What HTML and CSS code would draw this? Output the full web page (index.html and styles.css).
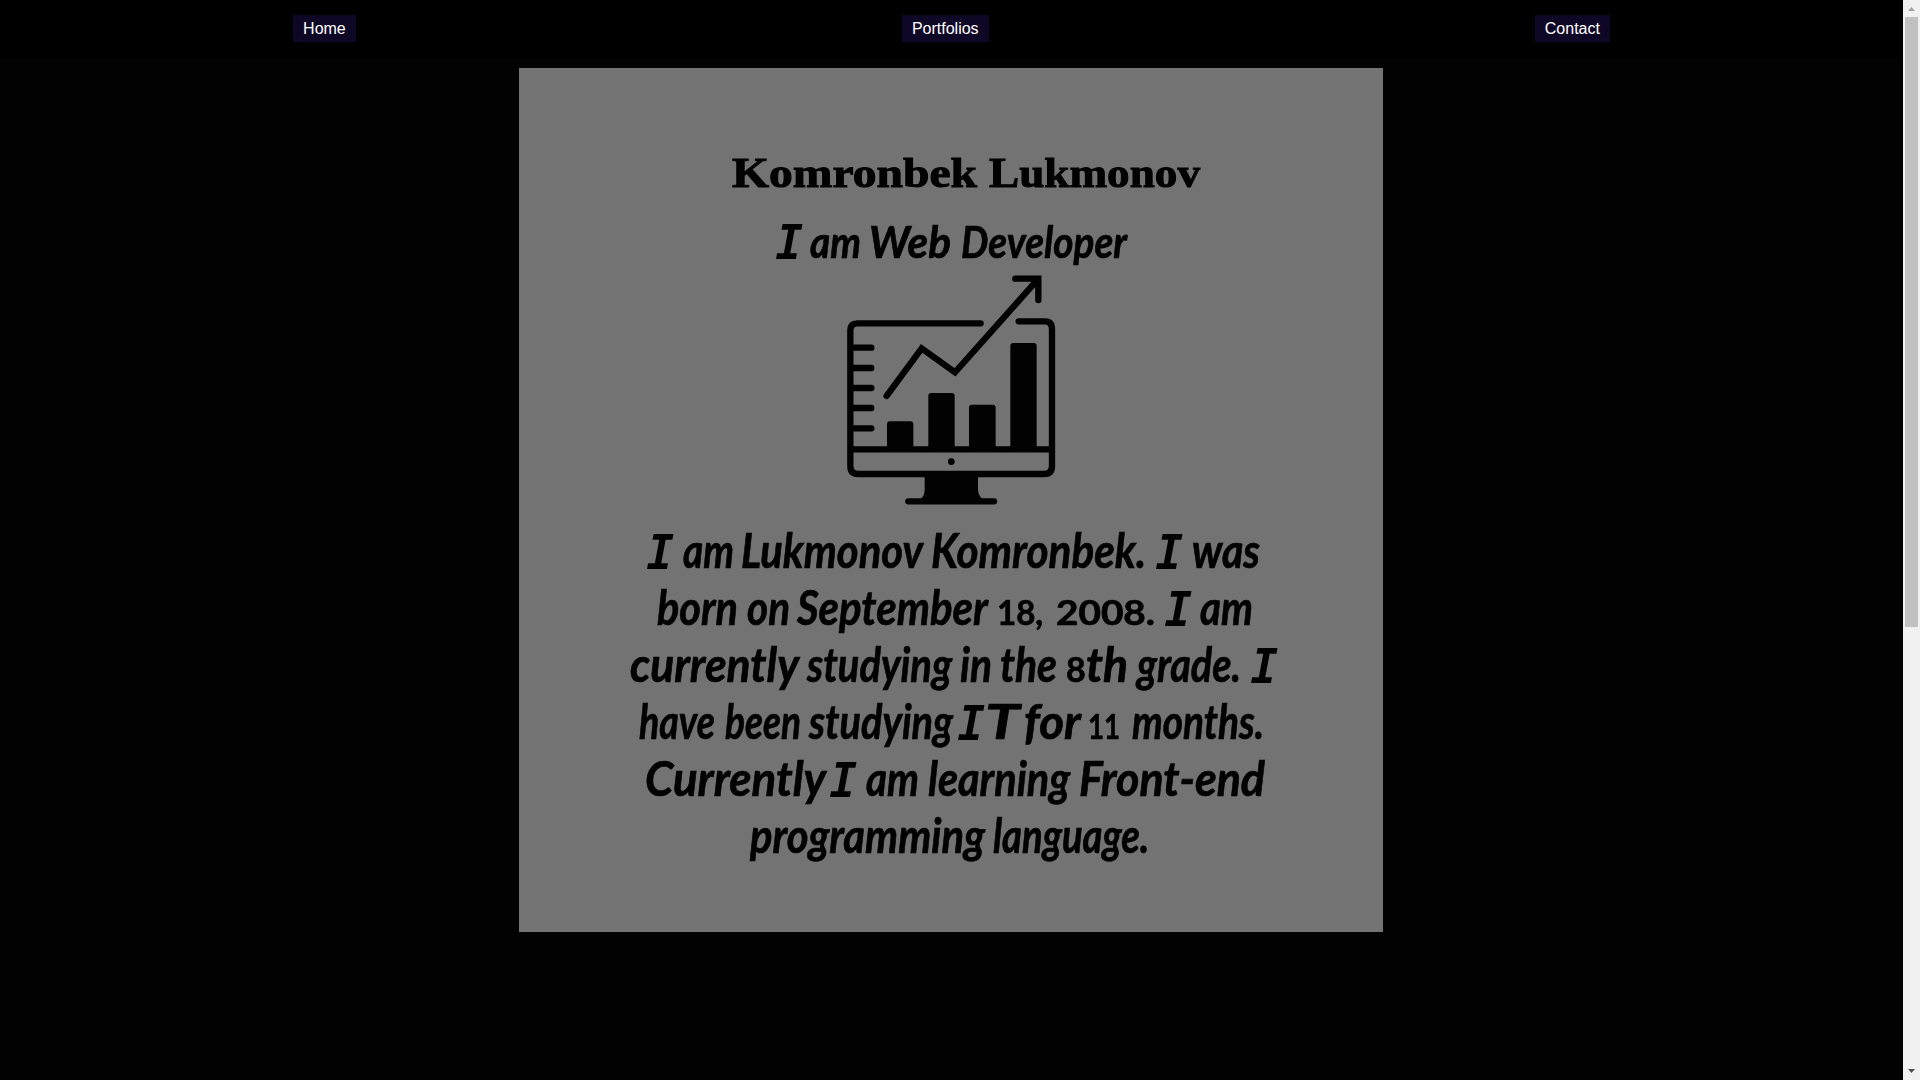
FILE: index.html
```html
<!DOCTYPE html>
<html lang="en">
<head>
<meta charset="utf-8">
<title>Komronbek Lukmonov</title>
<link rel="stylesheet" href="styles.css">
</head>
<body>
<div class="page">
  <header class="header">
    <nav class="nav">
      <a class="nav-link" href="#home">Home</a>
      <a class="nav-link" href="#portfolios">Portfolios</a>
      <a class="nav-link" href="#contact">Contact</a>
    </nav>
  </header>
  <main class="main">
    <svg class="card" viewBox="0 0 864 864">
      <text class="name" y="119"><tspan x="213" textLength="245" lengthAdjust="spacingAndGlyphs">Komronbek</tspan> <tspan x="470" textLength="211" lengthAdjust="spacingAndGlyphs">Lukmonov</tspan></text>
      <text class="role" y="190"><tspan class="slab" x="257">I</tspan> <tspan x="291" textLength="51" lengthAdjust="spacingAndGlyphs">am</tspan> <tspan x="350" textLength="82" lengthAdjust="spacingAndGlyphs">Web</tspan> <tspan x="442" textLength="166" lengthAdjust="spacingAndGlyphs">Developer</tspan></text>

      <!-- monitor with a growth chart -->
      <g class="chart" transform="translate(311 192) scale(.33333)">
        <path class="line" d="M452 190H82Q61 190 61 211V618Q61 642 84 642H643Q666 642 666 618V208Q666 184 645 184H566M61 568H666M61 263H124M61 324H124M61 384H124M61 444H124M61 505H124M170 408L275 265L375 337L620 62M556 56H625V120M235 724H492"/>
        <rect x="171" y="484" width="79" height="84" rx="9"/>
        <rect x="295" y="399" width="79" height="169" rx="9"/>
        <rect x="417" y="434" width="80" height="134" rx="9"/>
        <rect x="541" y="249" width="79" height="319" rx="9"/>
        <circle cx="364" cy="605" r="10"/>
        <path d="M284 642H444V690Q446 716 470 724H258Q284 716 284 690Z"/>
      </g>

      <text class="bio" y="500"><tspan class="slab" x="128">I</tspan> <tspan x="164" textLength="51" lengthAdjust="spacingAndGlyphs">am</tspan> <tspan x="222" textLength="181" lengthAdjust="spacingAndGlyphs">Lukmonov</tspan> <tspan x="412" textLength="215" lengthAdjust="spacingAndGlyphs">Komronbek.</tspan> <tspan class="slab" x="637">I</tspan> <tspan x="673" textLength="68" lengthAdjust="spacingAndGlyphs">was</tspan></text>
      <text class="bio" y="557"><tspan x="138" textLength="81" lengthAdjust="spacingAndGlyphs">born</tspan> <tspan x="228" textLength="43" lengthAdjust="spacingAndGlyphs">on</tspan> <tspan x="278" textLength="190" lengthAdjust="spacingAndGlyphs">September</tspan> <tspan class="digits" x="478" textLength="46" lengthAdjust="spacingAndGlyphs">18,</tspan> <tspan class="digits" x="537" textLength="99" lengthAdjust="spacingAndGlyphs">2008.</tspan> <tspan class="slab" x="646">I</tspan> <tspan x="681" textLength="53" lengthAdjust="spacingAndGlyphs">am</tspan></text>
      <text class="bio" y="614"><tspan x="111" textLength="168" lengthAdjust="spacingAndGlyphs">currently</tspan> <tspan x="288" textLength="145" lengthAdjust="spacingAndGlyphs">studying</tspan> <tspan x="441" textLength="32" lengthAdjust="spacingAndGlyphs">in</tspan> <tspan x="481" textLength="57" lengthAdjust="spacingAndGlyphs">the</tspan> <tspan class="digits" x="547">8</tspan><tspan x="567" textLength="42" lengthAdjust="spacingAndGlyphs">th</tspan> <tspan x="618" textLength="104" lengthAdjust="spacingAndGlyphs">grade.</tspan> <tspan class="slab" x="732">I</tspan></text>
      <text class="bio" y="671"><tspan x="120" textLength="76" lengthAdjust="spacingAndGlyphs">have</tspan> <tspan x="206" textLength="76" lengthAdjust="spacingAndGlyphs">been</tspan> <tspan x="290" textLength="144" lengthAdjust="spacingAndGlyphs">studying</tspan> <tspan class="slab" x="439">I</tspan><tspan x="466" textLength="33" lengthAdjust="spacingAndGlyphs">T</tspan> <tspan x="505" textLength="56" lengthAdjust="spacingAndGlyphs">for</tspan> <tspan class="digits" x="569" textLength="32" lengthAdjust="spacingAndGlyphs">11</tspan> <tspan x="613" textLength="132" lengthAdjust="spacingAndGlyphs">months.</tspan></text>
      <text class="bio" y="728"><tspan x="126" textLength="180" lengthAdjust="spacingAndGlyphs">Currently</tspan> <tspan class="slab" x="311">I</tspan> <tspan x="347" textLength="53" lengthAdjust="spacingAndGlyphs">am</tspan> <tspan x="409" textLength="142" lengthAdjust="spacingAndGlyphs">learning</tspan> <tspan x="560" textLength="186" lengthAdjust="spacingAndGlyphs">Front-end</tspan></text>
      <text class="bio" y="785"><tspan x="231" textLength="235" lengthAdjust="spacingAndGlyphs">programming</tspan> <tspan x="474" textLength="156" lengthAdjust="spacingAndGlyphs">language.</tspan></text>
    </svg>
  </main>
</div>
<div class="scrollbar">
  <svg class="arrow arrow-up" viewBox="0 0 17 17"><path d="M5 11H12L8.5 7Z"/></svg>
  <div class="thumb"></div>
  <svg class="arrow arrow-down" viewBox="0 0 17 17"><path d="M5 6H12L8.5 10Z"/></svg>
</div>
</body>
</html>
```
FILE: styles.css
```css
* {
  box-sizing: border-box;
}

body {
  margin: 0;
  height: 100vh;
  display: grid;
  grid-template-columns: 1fr 17px;
  overflow: hidden;
  background: #020202;
  font-family: "Liberation Sans", Arial, sans-serif;
}

.header {
  height: 58px;
  padding: 15px 20px 0;
  background: #000;
}

.nav {
  display: flex;
  justify-content: space-around;
}

.nav-link {
  height: 27px;
  padding: 0 10px;
  background: #0f0726;
  color: #fff;
  font-size: 16px;
  line-height: 27px;
  text-decoration: none;
}

.main {
  display: flex;
  justify-content: center;
  padding: 10px 1px 0 0;
}

.card {
  width: 864px;
  height: 864px;
  background: #737373;
}

.name,
.role,
.bio,
.chart {
  fill: #020203;
  filter: blur(.6px);
}

.name {
  font: 700 43px "Liberation Serif", serif;
  stroke: #020203;
  stroke-width: 1px;
}

.role,
.bio {
  font-family: Lato, sans-serif;
  font-style: italic;
  font-weight: 700;
  stroke: #020203;
  stroke-width: .7px;
}

.role {
  font-size: 44px;
}

.bio {
  font-size: 47px;
}

.slab {
  font-family: "DejaVu Sans Mono", monospace;
  font-size: 44px;
  font-weight: 400;
  stroke-width: 2px;
}

.digits {
  font-size: 34px;
  font-style: normal;
}

.line {
  fill: none;
  stroke: #020203;
  stroke-width: 19px;
  stroke-linecap: round;
}

.scrollbar {
  display: flex;
  flex-direction: column;
  background: #f1f1f1;
}

.arrow {
  width: 17px;
  height: 17px;
}

.arrow-up {
  fill: #a3a3a3;
}

.arrow-down {
  margin-top: auto;
  fill: #505050;
}

.thumb {
  width: 13px;
  height: 610px;
  margin-left: 2px;
  background: #c1c1c1;
}
```
